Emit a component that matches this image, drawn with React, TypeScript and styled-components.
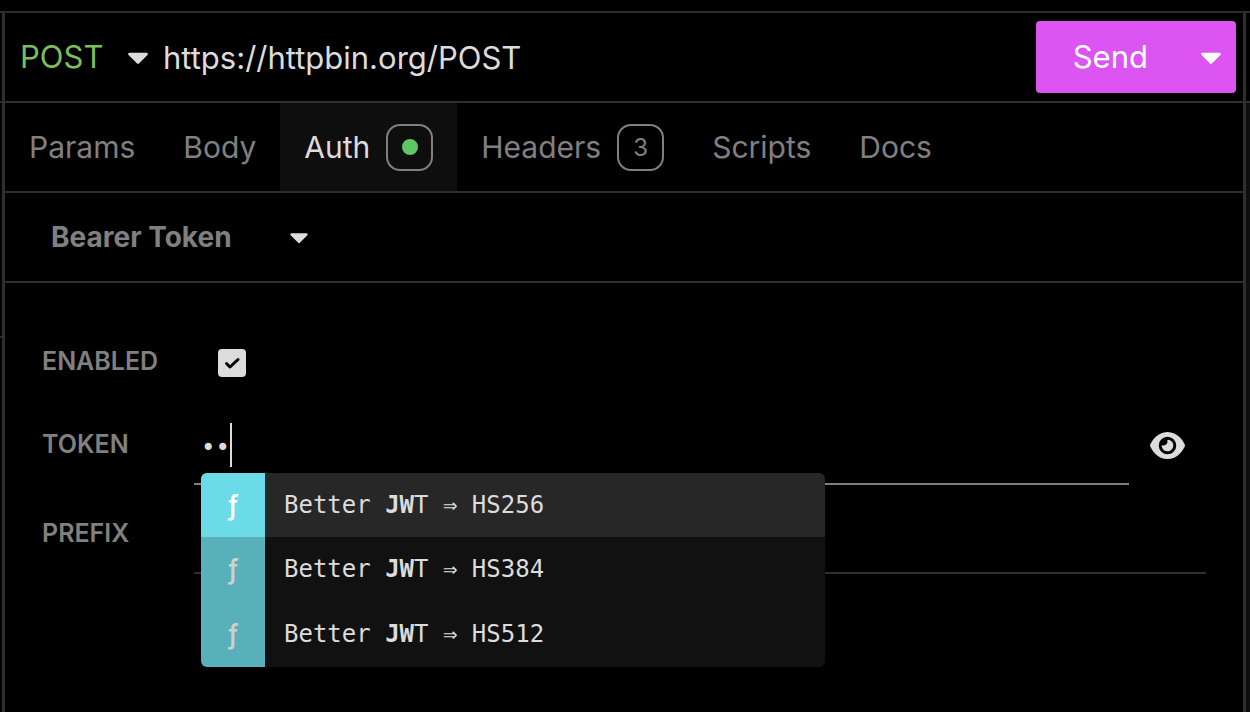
import React, { useState } from 'react';
import styled, { createGlobalStyle, css } from 'styled-components';
import { FaCaretDown } from 'react-icons/fa';
import { FaEye } from 'react-icons/fa6';

const color = {
  line: '#2e2e2e',
  text: '#dcdcdc',
  dim: '#808080',
};

const GlobalStyle = createGlobalStyle`
  * { box-sizing: border-box; }
  html, body { margin: 0; background: #000; }
  body {
    color: ${color.text};
    font: 400 30px/36px Inter, sans-serif;
    overflow: hidden;
  }
  button, input, select { font: inherit; color: inherit; margin: 0; padding: 0; border: 0; background: none; outline: none; }
  button, select { cursor: pointer; }
`;

const Shell = styled.div`
  display: flex;
  flex-direction: column;
  min-height: 100vh;
`;

const TopStrip = styled.header`
  height: 13px;
  flex: none;
  border-bottom: 2px solid ${color.line};
`;

const Columns = styled.div`
  flex: 1;
  display: grid;
  grid-template-columns: 2px minmax(0, 1fr) 4px;
`;

const SidePane = styled.aside`
  display: flex;
  flex-direction: column;
`;

const SideBlock = styled.div<{ $height: number }>`
  height: ${p => p.$height}px;
  border-bottom: 2px solid ${color.line};
`;

const SideRest = styled.div`
  flex: 1;
  background: #0e0e0e;
`;

const RequestPane = styled.main`
  border: solid ${color.line};
  border-width: 0 3px;
`;

const bar = css`
  display: flex;
  align-items: center;
  height: 90px;
  border-bottom: 2px solid ${color.line};
`;

const UrlBar = styled.form`
  ${bar}
  gap: 14px;
  padding: 0 7px 0 15px;
  font-size: 31px;
`;

const SelectBox = styled.div<{ $width: number }>`
  display: grid;
  grid-template-columns: 1fr 22px;
  align-items: center;
  width: ${p => p.$width}px;
  flex: none;

  select {
    grid-area: 1 / 1 / 2 / 3;
    appearance: none;
    height: 40px;
  }

  svg {
    grid-area: 1 / 2;
    justify-self: center;
    pointer-events: none;
  }
`;

const MethodSelect = styled.select`
  && { color: #7dbd5b; }
`;

const AuthSelect = styled.select`
  && {
    color: ${color.dim};
    font-size: 28px;
    font-weight: 700;
  }
`;

const UrlInput = styled.input`
  flex: 1;
  min-width: 0;
  height: 40px;
`;

const SendGroup = styled.div`
  display: flex;
  height: 72px;
  border-radius: 4px;
  overflow: hidden;
  color: #fff;
  background: #dc54f2;
`;

const SendButton = styled.button`
  padding: 0 37px;
`;

const SendMenuButton = styled.button`
  display: grid;
  place-items: center;
  width: 51px;
`;

const Tabs = styled.nav`
  ${bar}
  align-items: stretch;
`;

const Tab = styled.button<{ $active?: boolean }>`
  display: flex;
  align-items: center;
  gap: 16px;
  padding: 0 24px;
  color: ${p => (p.$active ? color.text : color.dim)};
  background: ${p => (p.$active ? '#0e0e0e' : 'none')};
`;

const TabBadge = styled.span`
  display: grid;
  place-items: center;
  width: 47px;
  height: 47px;
  border: 2px solid ${color.dim};
  border-radius: 14px;
  font-size: 24px;
`;

const Count = styled.span`
  padding-top: 2px;
`;

const Dot = styled.span`
  width: 16px;
  height: 16px;
  border-radius: 50%;
  background: #5ec665;
`;

const AuthBar = styled.div`
  ${bar}
  padding-left: 46px;
`;

const Fields = styled.div`
  display: flex;
  flex-direction: column;
  gap: 14px;
  padding: 47px 37px 0 37px;
`;

const FieldLabel = styled.label`
  padding-bottom: 8px;
  color: ${color.dim};
  font-size: 25px;
  font-weight: 600;
`;

const Field = styled.div<{ $compact?: boolean }>`
  display: grid;
  grid-template-columns: 152px minmax(0, 1fr);
  align-items: center;
  height: ${p => (p.$compact ? 66 : 75)}px;

  ${FieldLabel} {
    padding-bottom: ${p => (p.$compact ? 4 : 8)}px;
  }
`;

const CheckWrap = styled.span`
  display: grid;
  width: 28px;
  height: 28px;
  margin-left: 24px;

  svg { grid-area: 1 / 1; pointer-events: none; }
`;

const Checkbox = styled.input`
  grid-area: 1 / 1;
  appearance: none;
  width: 28px;
  height: 28px;
  border-radius: 4px;
  && { background: ${color.text}; }
`;

const FieldBody = styled.div`
  display: flex;
  align-items: stretch;
  height: 75px;
`;

const InputWrap = styled.div`
  position: relative;
  flex: 1;
  display: flex;
`;

const LineInput = styled.input<{ $focused?: boolean }>`
  flex: 1;
  min-width: 0;
  && {
    padding: 2px 6px 0 7px;
    border-bottom: 2px solid ${p => (p.$focused ? color.dim : color.line)};
    font-family: "DejaVu Sans Mono", monospace;
    font-size: 24px;
  }
`;

const TextCursor = styled.span`
  position: absolute;
  left: 36px;
  top: 13px;
  width: 2px;
  height: 44px;
  background: ${color.text};
`;

const RevealButton = styled.button`
  display: grid;
  place-items: center;
  width: 77px;
  && { padding-bottom: 4px; }
`;

const Suggestions = styled.ul`
  position: absolute;
  z-index: 1;
  left: 7px;
  top: 63px;
  width: 624px;
  margin: 0;
  padding: 0;
  list-style: none;
  border-radius: 6px;
  overflow: hidden;
  background: #111;
  font: 24px/64px "DejaVu Sans Mono", monospace;
`;

const Suggestion = styled.li<{ $active?: boolean }>`
  display: flex;
  height: ${p => (p.$active ? 64 : 65)}px;
  background: ${p => (p.$active ? '#272727' : 'none')};
`;

const SuggestionKind = styled.span<{ $active?: boolean }>`
  width: 64px;
  margin-right: 19px;
  text-align: center;
  font-family: Inter, sans-serif;
  font-size: 28px;
  font-weight: 500;
  color: ${p => (p.$active ? '#fff' : '#cfcfcf')};
  background: ${p => (p.$active ? '#6adbe7' : '#57b0ba')};
`;

const tabs = [
  { name: 'Params' },
  { name: 'Body' },
  { name: 'Auth', badge: <Dot /> },
  { name: 'Headers', badge: <Count>3</Count> },
  { name: 'Scripts' },
  { name: 'Docs' },
];

const algorithms = ['HS256', 'HS384', 'HS512'];

export default function App() {
  const [activeTab, setActiveTab] = useState('Auth');
  const [url, setUrl] = useState('https://httpbin.org/POST');
  const [enabled, setEnabled] = useState(true);
  const [token, setToken] = useState('JW');
  const [prefix, setPrefix] = useState('');

  return (
    <Shell>
      <GlobalStyle />
      <TopStrip />
      <Columns>
        <SidePane>
          <SideBlock $height={90} />
          <SideBlock $height={235} />
        </SidePane>
        <RequestPane>
          <UrlBar onSubmit={e => e.preventDefault()}>
            <SelectBox $width={129}>
              <MethodSelect aria-label="Method" defaultValue="POST">
                <option>GET</option>
                <option>POST</option>
                <option>PUT</option>
              </MethodSelect>
              <FaCaretDown size={34} />
            </SelectBox>
            <UrlInput aria-label="Request URL" value={url} onChange={e => setUrl(e.target.value)} />
            <SendGroup>
              <SendButton type="submit">Send</SendButton>
              <SendMenuButton type="button" aria-label="Send options">
                <FaCaretDown size={34} />
              </SendMenuButton>
            </SendGroup>
          </UrlBar>
          <Tabs>
            {tabs.map(t => (
              <Tab key={t.name} type="button" $active={t.name === activeTab} onClick={() => setActiveTab(t.name)}>
                {t.name}
                {t.badge && <TabBadge>{t.badge}</TabBadge>}
              </Tab>
            ))}
          </Tabs>
          <AuthBar>
            <SelectBox $width={259}>
              <AuthSelect aria-label="Authentication type" defaultValue="Bearer Token">
                <option>Basic Auth</option>
                <option>Bearer Token</option>
              </AuthSelect>
              <FaCaretDown size={30} />
            </SelectBox>
          </AuthBar>
          <Fields>
            <Field $compact>
              <FieldLabel htmlFor="enabled">ENABLED</FieldLabel>
              <CheckWrap>
                <Checkbox id="enabled" type="checkbox" checked={enabled} onChange={e => setEnabled(e.target.checked)} />
                {enabled && (
                  <svg width="28" height="28" viewBox="0 0 28 28" fill="none" stroke="#000" strokeWidth="3" strokeLinecap="round" strokeLinejoin="round">
                    <path d="M8.5 14.5L12 18L20 10.5" />
                  </svg>
                )}
              </CheckWrap>
            </Field>
            <Field>
              <FieldLabel htmlFor="token">TOKEN</FieldLabel>
              <FieldBody>
                <InputWrap>
                  <LineInput id="token" type="password" $focused value={token} onChange={e => setToken(e.target.value)} />
                  <TextCursor />
                  <Suggestions>
                    {algorithms.map((name, i) => (
                      <Suggestion key={name} $active={i === 0}>
                        <SuggestionKind $active={i === 0}>ƒ</SuggestionKind>
                        <span>Better <b>JW</b>T ⇒ {name}</span>
                      </Suggestion>
                    ))}
                  </Suggestions>
                </InputWrap>
                <RevealButton type="button" aria-label="Reveal token">
                  <FaEye size={35} />
                </RevealButton>
              </FieldBody>
            </Field>
            <Field>
              <FieldLabel htmlFor="prefix">PREFIX</FieldLabel>
              <FieldBody>
                <InputWrap>
                  <LineInput id="prefix" type="text" value={prefix} onChange={e => setPrefix(e.target.value)} />
                </InputWrap>
              </FieldBody>
            </Field>
          </Fields>
        </RequestPane>
        <SidePane>
          <SideBlock $height={90} />
          <SideRest />
        </SidePane>
      </Columns>
    </Shell>
  );
}
